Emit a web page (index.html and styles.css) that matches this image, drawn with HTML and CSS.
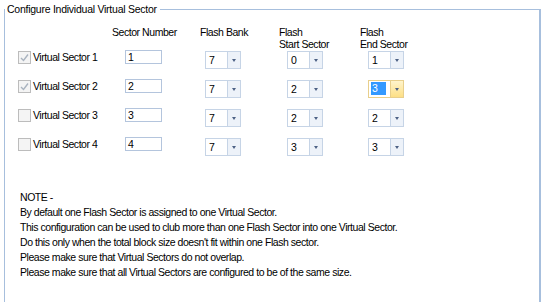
FILE: index.html
```html
<!DOCTYPE html>
<html lang="en">
<head>
  <meta charset="UTF-8">
  <title>Configure Individual Virtual Sector</title>
  <link rel="stylesheet" href="styles.css">
</head>
<body>

  <fieldset class="group">
    <legend>Configure Individual Virtual Sector</legend>

    <div class="head">
      <div>Sector Number</div>
      <div>Flash Bank</div>
      <div>Flash<br>Start Sector</div>
      <div>Flash<br>End Sector</div>
    </div>

    <div class="row">
      <label class="check"><span class="box on"><svg viewBox="0 0 11 11"><path d="M2 6 L4.5 8.5 L9 2.5" /></svg></span>Virtual Sector 1</label>
      <div class="text">1</div>
      <div class="combo"><span class="val">7</span><span class="btn"><i></i></span></div>
      <div class="combo"><span class="val">0</span><span class="btn"><i></i></span></div>
      <div class="combo"><span class="val">1</span><span class="btn"><i></i></span></div>
    </div>

    <div class="row">
      <label class="check"><span class="box on"><svg viewBox="0 0 11 11"><path d="M2 6 L4.5 8.5 L9 2.5" /></svg></span>Virtual Sector 2</label>
      <div class="text">2</div>
      <div class="combo"><span class="val">7</span><span class="btn"><i></i></span></div>
      <div class="combo"><span class="val">2</span><span class="btn"><i></i></span></div>
      <div class="combo hot"><span class="val"><b>3</b></span><span class="btn"><i></i></span></div>
    </div>

    <div class="row">
      <label class="check"><span class="box"></span>Virtual Sector 3</label>
      <div class="text">3</div>
      <div class="combo"><span class="val">7</span><span class="btn"><i></i></span></div>
      <div class="combo"><span class="val">2</span><span class="btn"><i></i></span></div>
      <div class="combo"><span class="val">2</span><span class="btn"><i></i></span></div>
    </div>

    <div class="row">
      <label class="check"><span class="box"></span>Virtual Sector 4</label>
      <div class="text">4</div>
      <div class="combo"><span class="val">7</span><span class="btn"><i></i></span></div>
      <div class="combo"><span class="val">3</span><span class="btn"><i></i></span></div>
      <div class="combo"><span class="val">3</span><span class="btn"><i></i></span></div>
    </div>

    <div class="note">
      NOTE -<br>
      By default one Flash Sector is assigned to one Virtual Sector.<br>
      This configuration can be used to club more than one Flash Sector into one Virtual Sector.<br>
      Do this only when the total block size doesn't fit within one Flash sector.<br>
      Please make sure that Virtual Sectors do not overlap.<br>
      Please make sure that all Virtual Sectors are configured to be of the same size.
    </div>
  </fieldset>

</body>
</html>
```

FILE: styles.css
```css
html, body {
  height: 302px;
  overflow: hidden;
}

body {
  margin: 0;
  padding-top: 3px;
  box-sizing: border-box;
  background-color: #ffffff;
  color: #000000;
  font-family: 'Liberation Sans', Arial, sans-serif;
  font-size: 10.5px;
  letter-spacing: -0.45px;
}

.group {
  margin: 0 0 0 4px;
  padding: 0;
  width: 534px;
  height: 310px;
  border: 1px solid #a7bfdd;
  border-right: 2px solid #a7bfdd;
  border-bottom: none;
  box-sizing: content-box;
}

.group legend {
  padding: 0 3px 0 2px;
  margin-left: 0;
  line-height: 13px;
  letter-spacing: -0.25px;
}

.head {
  display: grid;
  grid-template-columns: 88px 79px 81px auto;
  padding-left: 107px;
  margin-top: 10px;
  line-height: 12px;
}

.row {
  display: grid;
  grid-template-columns: 107px 80px 82px 81px auto;
  align-items: start;
  padding-left: 13px;
  height: 29px;
}

.row:first-of-type {
  margin-top: 5px;
}

.check {
  display: flex;
  align-items: center;
  gap: 2px;
  height: 13px;
  margin-top: 1px;
  line-height: 13px;
}

.box {
  width: 11px;
  height: 11px;
  border: 1px solid #bcbcbc;
  background-color: #f4f4f4;
  flex: none;
}

.box svg {
  display: block;
  width: 11px;
  height: 11px;
}

.box path {
  fill: none;
  stroke: #a9b3bf;
  stroke-width: 1.4;
}

.text {
  width: 33px;
  height: 12px;
  border: 1px solid #b4c5dd;
  padding-left: 2px;
  line-height: 12px;
}

.combo {
  display: flex;
  width: 34px;
  height: 16px;
  margin-top: 1px;
  border: 1px solid #c6d4e6;
  line-height: 16px;
}

.combo .val {
  flex: 1;
  padding-left: 3px;
}

.combo .btn {
  width: 12px;
  border-left: 1px solid #c6d4e6;
  background-color: #edf2f9;
  display: flex;
  align-items: center;
  justify-content: center;
}

.combo .btn i {
  width: 0;
  height: 0;
  border-left: 2.5px solid transparent;
  border-right: 2.5px solid transparent;
  border-top: 3px solid #4d6185;
}

.combo.hot {
  border-color: #e8cf8c;
}

.combo.hot .btn {
  border-left-color: #e8cf8c;
  background: linear-gradient(#fff4cc, #fddf85);
}

.combo.hot .val {
  padding-left: 2px;
  padding-top: 1px;
}

.combo.hot b {
  display: block;
  width: 14px;
  height: 13px;
  line-height: 13px;
  padding-left: 1px;
  font-weight: normal;
  color: #ffffff;
  background-color: #3399ff;
}

.note {
  margin-top: 24px;
  padding-left: 15px;
  line-height: 15px;
}
```
